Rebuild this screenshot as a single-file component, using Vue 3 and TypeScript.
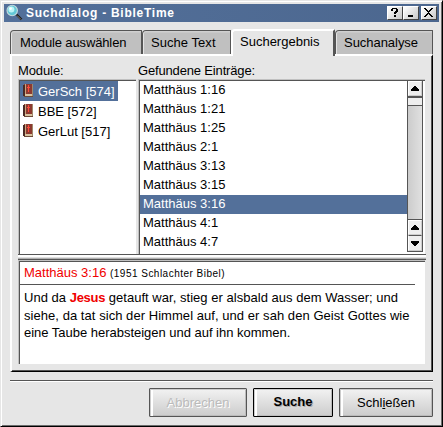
<script setup lang="ts">
import { ref } from 'vue'

interface Module {
  name: string
  hits: number
}

const tabs = ['Module auswählen', 'Suche Text', 'Suchergebnis', 'Suchanalyse']
const activeTab = ref(2)
const modules: Module[] = [
  { name: 'GerSch', hits: 574 },
  { name: 'BBE', hits: 572 },
  { name: 'GerLut', hits: 517 },
]
const activeModule = ref(0)
const entries = ['1:16', '1:21', '1:25', '2:1', '3:13', '3:15', '3:16', '4:1', '4:7']
const activeEntry = ref(6)
</script>

<template>
  <div class="window">
    <header class="titlebar">
      <svg class="lens" width="18" height="18" viewBox="0 0 18 18">
        <path d="M10.5 10.5l5 5" stroke="#1c1c1c" stroke-width="2.4" />
        <path d="M11 11.5l4 4" stroke="#a8a090" stroke-width=".8" />
        <circle cx="6.2" cy="6.5" r="5.2" fill="#62c8d6" stroke="#c4dadd" stroke-width="1.1" />
        <circle cx="5.4" cy="5.6" r="3" fill="#bdf3f6" />
        <circle cx="4.6" cy="4.6" r="1.4" fill="#f2ffff" />
      </svg>
      <h1>Suchdialog - BibleTime</h1>
      <div class="controls">
        <button>
          <svg width="15" height="14" shape-rendering="crispEdges"><path d="M5 2h5v1h1v3h-1v1h-1v1h-2v-2h1v-1h1v-2h-3v2h-2v-2h1zM7 9h2v2h-2z" /></svg>
        </button>
        <button>
          <svg width="15" height="14" shape-rendering="crispEdges"><path d="M5 9h5v2h-5z" /></svg>
        </button>
        <button class="close">
          <svg width="15" height="14" shape-rendering="crispEdges"><path d="M3 2h2v1h1v1h1v1h1v-1h1v-1h1v-1h2v1h-1v1h-1v1h-1v1h-1v1h1v1h1v1h1v1h1v1h-2v-1h-1v-1h-1v-1h-1v1h-1v1h-1v1h-2v-1h1v-1h1v-1h1v-1h1v-1h-1v-1h-1v-1h-1v-1h-1z" /></svg>
        </button>
      </div>
    </header>

    <nav class="tabs">
      <button v-for="(tab, i) in tabs" :key="tab" :class="['tab', `tab-${i}`, { active: i === activeTab }]" @click="activeTab = i">
        {{ tab }}
      </button>
    </nav>

    <main class="panel">
      <div class="lists">
        <section class="modules">
          <h2>Module:</h2>
          <ul class="sunken">
            <li v-for="(m, i) in modules" :key="m.name" :class="{ selected: i === activeModule }" @click="activeModule = i">
              <svg width="12" height="16" viewBox="0 0 12 16" shape-rendering="crispEdges">
                <path d="M1 1H10V14H1z" fill="#d8c3a0" />
                <path d="M9 1H10V13H9z" fill="#a08a6c" />
                <path d="M1 1H9V11H1z" fill="#8d3a30" />
                <path d="M2 1H3V11H2z" fill="#c9a27c" />
                <path d="M0 2H2V13H0z" fill="#4a2a24" />
                <path d="M1 13H10V14H1z" fill="#6b4a38" />
                <path d="M5 2H6V9H5zM4 4H7V5H4z" fill="#ff4a3c" />
              </svg>
              <span>{{ m.name }} [{{ m.hits }}]</span>
            </li>
          </ul>
        </section>
        <section class="results">
          <h2>Gefundene Einträge:</h2>
          <div class="sunken result-box">
            <ul>
              <li v-for="(e, i) in entries" :key="e" :class="{ selected: i === activeEntry }" @click="activeEntry = i">Matthäus {{ e }}</li>
            </ul>
            <div class="scrollbar">
              <button class="arrow"><svg width="14" height="14" shape-rendering="crispEdges"><path d="M6 4h2v1h1v1h1v1h1v2h-8v-2h1v-1h1v-1h1z" /></svg></button>
              <div class="thumb"></div>
              <div class="track"></div>
              <button class="arrow"><svg width="14" height="14" shape-rendering="crispEdges"><path d="M6 4h2v1h1v1h1v1h1v2h-8v-2h1v-1h1v-1h1z" /></svg></button>
              <button class="arrow"><svg width="14" height="14" shape-rendering="crispEdges"><path d="M3 5h8v2h-1v1h-1v1h-1v1h-2v-1h-1v-1h-1v-1h-1z" /></svg></button>
            </div>
          </div>
        </section>
      </div>
      <div class="splitter"></div>
      <article class="preview">
        <h3>Matthäus 3:16 <small>(1951 Schlachter Bibel)</small></h3>
        <p>
          <span class="line l1">Und da <b>Jesus</b> getauft war, stieg er alsbald aus dem Wasser; und</span>
          <span class="line l2">siehe, da tat sich der Himmel auf, und er sah den Geist Gottes wie</span>
          <span class="line l3">eine Taube herabsteigen und auf ihn kommen.</span>
        </p>
      </article>
    </main>

    <footer>
      <button class="action cancel" disabled>Abbrechen</button>
      <button class="action search">Suche</button>
      <button class="action dismiss">Schl<u>i</u>eßen</button>
    </footer>
  </div>
</template>

<style>
body {
  margin: 0;
  overflow: hidden;
}
</style>

<style scoped>
* {
  box-sizing: border-box;
}
.window {
  width: 443px;
  height: 427px;
  display: flex;
  flex-direction: column;
  padding: 3px 2px 0 3px;
  background: #e6e6e6;
  border: 1px solid #e6e6e6;
  border-right-color: #000;
  border-bottom-color: #000;
  box-shadow: inset 1px 1px #fff, inset -1px -1px #6c6c6c;
  font: 13px/16px "Liberation Sans", Arial, sans-serif;
  color: #000;
}
button {
  display: block;
  padding: 0;
  margin: 0;
  border: 0;
  border-radius: 0;
  font: inherit;
  color: inherit;
}
h1, h2, h3, p, ul {
  margin: 0;
  padding: 0;
  font: inherit;
  list-style: none;
}
svg {
  display: block;
  flex: none;
}
.titlebar {
  display: flex;
  flex: none;
  width: 435px;
  height: 18px;
  padding-left: 2px;
  background: linear-gradient(90deg, #53709a, #4c678f);
}
h1 {
  flex: 1;
  margin-left: 2px;
  color: #fff;
  font: bold 12px/19px "Liberation Sans", Arial, sans-serif;
  letter-spacing: .74px;
  white-space: nowrap;
}
.controls {
  display: flex;
  align-items: flex-start;
  padding: 2px 2px 0 0;
}
.controls button {
  width: 16px;
  height: 14px;
  background: linear-gradient(135deg, #fff, #c8c8c8);
  border: 1px solid #fff;
  border-right-color: #444;
  border-bottom-color: #444;
}
.controls button svg {
  margin: -1px 0 0 -1px;
}
.controls .close {
  margin-left: 2px;
}
.tabs {
  display: flex;
  flex: none;
  align-items: flex-end;
  height: 32px;
  margin-left: 6px;
}
.tab {
  height: 24px;
  background: linear-gradient(#d0d0d0 1px, #c0c0c0 2px);
  border: 1px solid #555;
  border-bottom: 0;
  border-radius: 4px 1px 0 0;
  box-shadow: inset 1px 0 #e4e4e4;
  text-align: left;
  padding: 1px 0 0 9px;
  white-space: nowrap;
}
.tab-0 { width: 132px; letter-spacing: -.13px; }
.tab-1 { width: 89px; padding-left: 8px; letter-spacing: .05px; }
.tab-2 { width: 104px; }
.tab-3 { width: 98px; padding-left: 8px; letter-spacing: -.04px; }
.tab.active {
  height: 27px;
  margin-bottom: -2px;
  background: #e6e6e6;
  border: 2px solid #fff;
  border-bottom: 0;
  border-right: 2px solid #555;
  box-shadow: none;
  padding: 0 0 3px 7px;
  position: relative;
}
.panel {
  flex: none;
  width: 423px;
  height: 318px;
  margin-left: 6px;
  padding: 7px 6px 0 6px;
  border: 2px solid #fff;
  border-right: 1px solid #000;
  border-bottom: 1px solid #000;
  box-shadow: inset -1px -1px #555;
}
.lists {
  display: flex;
  gap: 2px;
  height: 191px;
}
h2 {
  height: 16px;
}
.modules h2 {
  letter-spacing: -.1px;
}
.modules {
  width: 118px;
}
.results {
  width: 287px;
}
.results h2 {
  letter-spacing: -.16px;
}
.sunken {
  height: 175px;
  background: #fff;
  border-top: 1px solid #c0c0c0;
  border-left: 1px solid #c0c0c0;
  box-shadow: inset 1px 1px #555;
  padding: 1px 0 0 1px;
}
.modules li {
  display: flex;
  align-items: center;
  width: 98px;
  height: 20px;
  padding-left: 3px;
}
.modules li span {
  margin-left: 3px;
  padding-top: 2px;
  white-space: nowrap;
}
.modules .selected, .results .selected {
  background: #53709a;
  color: #fff;
}
.result-box {
  display: flex;
}
.result-box ul {
  width: 267px;
}
.result-box li {
  height: 19px;
  padding: 1px 0 0 3px;
}
.scrollbar {
  display: flex;
  flex-direction: column;
  width: 16px;
  height: 171px;
  border: 1px solid #555;
  border-top: 0;
  background: linear-gradient(90deg, #ccc, #e0e0e0);
}
.arrow {
  height: 15px;
  flex: none;
  background: #eee;
  border: 1px solid #fff;
  border-right-color: #ccc;
  border-bottom-color: #ccc;
}
.arrow svg {
  margin: -1px;
}
.thumb {
  height: 10px;
  background: #eee;
  border: solid #555;
  border-width: 2px 0 1px;
}
.track {
  flex: 1;
  border-bottom: 1px solid #555;
}
.arrow:last-child {
  border-top: 1px solid #555;
  height: 16px;
}
.splitter {
  height: 6px;
  background: linear-gradient(#555 1px, #fff 1px, #fff 3px, #e0e0e0 3px, #e0e0e0 4px, #b0b0b0 4px, #b0b0b0 5px, #555 5px);
}
.preview {
  width: 407px;
  height: 104px;
  background: #fff;
  border-left: 1px solid #c0c0c0;
  border-top: 1px solid #c0c0c0;
  box-shadow: inset 1px 1px #555;
  padding: 3px 0 0 1px;
}
h3 {
  width: 395px;
  height: 21px;
  padding: 1px 0 0 4px;
  border-bottom: 1px solid #555;
  color: #f00000;
}
small {
  color: #000;
  font-size: 10px;
  letter-spacing: .48px;
}
p {
  padding: 4px 0 0 4px;
}
.line {
  display: block;
  height: 17.7px;
  line-height: 17.7px;
  white-space: nowrap;
}
.line b {
  color: #f00000;
  letter-spacing: -.3px;
}
.l1 { letter-spacing: .03px; }
.l2 { letter-spacing: .05px; }
.l3 { letter-spacing: -.02px; }
footer {
  display: flex;
  flex: none;
  justify-content: flex-end;
  width: 423px;
  height: 38px;
  margin: 8px 0 0 6px;
  padding-top: 7px;
  border-top: 1px solid #555;
  box-shadow: inset 0 1px #fff;
  gap: 6px;
}
.action {
  height: 29px;
  background: linear-gradient(#f2f2f2, #ccc);
  border: 1px solid #555;
  border-radius: 1px;
  box-shadow: inset 1px 1px #ccc, inset 3px 0 #fff, inset -1px -1px #bbb;
}
.cancel {
  width: 98px;
  color: #bbb;
  text-shadow: 1px 1px #fff;
}
.search {
  width: 80px;
  padding-bottom: 2px;
  border-color: #000;
  font-weight: bold;
  text-shadow: 1px 1px #aaa;
}
.dismiss {
  width: 94px;
}
</style>
